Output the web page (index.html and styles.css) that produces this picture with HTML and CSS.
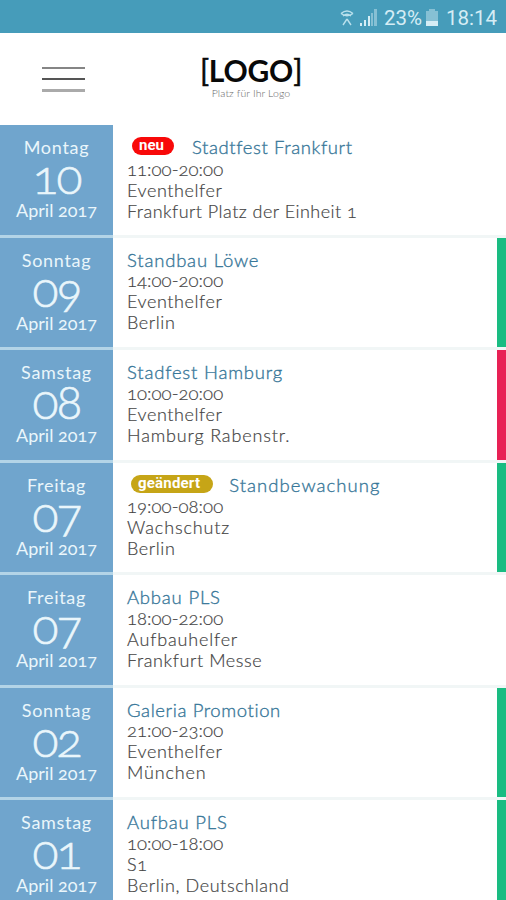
FILE: index.html
```html
<!DOCTYPE html>
<html lang="de">
<head>
<meta charset="utf-8">
<title>Termine</title>
<link rel="stylesheet" href="styles.css">
</head>
<body>
<div class="status">
  <svg class="wifi" viewBox="0 0 14 18" width="14" height="18"><path d="M1 4.5Q7-.5 13 4.5M3 7Q7 3.5 11 7M1 4.5Q7 9 13 4.5M7 10L3 16M7 10L11 16"/></svg>
  <svg class="signal" viewBox="0 0 17 17" width="17" height="17"><path d="M0 14h2v3H0zM4 11h2v6H4zM8 7h2v10H8z"/><path class="faint" d="M11 4h2v13h-2zM14 0h3v17h-3z"/></svg>
  <span class="percent">23%</span>
  <svg class="battery" viewBox="0 0 12 17" width="12" height="17"><path class="faint" d="M3 0h6v2h3v10H0V2h3z"/><path d="M0 12h12v5H0z"/></svg>
  <span class="clock">18:14</span>
</div>
<header class="header">
  <div class="menu"><i></i><i></i><i></i></div>
  <div class="logo"><b><span>[</span>LOGO<span>]</span></b><small>Platz für Ihr Logo</small></div>
</header>
<main class="list">
  <article class="row">
    <div class="date"><span>Montag</span><strong>10</strong><span class="month">April 2017</span></div>
    <div class="info tagged"><h2><em class="new">neu</em>Stadtfest Frankfurt</h2><p class="time">11:00-20:00</p><p>Eventhelfer</p><p class="long">Frankfurt Platz der Einheit 1</p></div>
  </article>
  <article class="row green">
    <div class="date"><span>Sonntag</span><strong>09</strong><span class="month">April 2017</span></div>
    <div class="info"><h2>Standbau Löwe</h2><p class="time">14:00-20:00</p><p>Eventhelfer</p><p>Berlin</p></div>
  </article>
  <article class="row red">
    <div class="date"><span>Samstag</span><strong>08</strong><span class="month">April 2017</span></div>
    <div class="info"><h2>Stadfest Hamburg</h2><p class="time">10:00-20:00</p><p>Eventhelfer</p><p class="wide">Hamburg Rabenstr.</p></div>
  </article>
  <article class="row green">
    <div class="date"><span>Freitag</span><strong>07</strong><span class="month">April 2017</span></div>
    <div class="info tagged"><h2 class="loose"><em class="changed">geändert</em>Standbewachung</h2><p class="time">19:00-08:00</p><p class="wide">Wachschutz</p><p>Berlin</p></div>
  </article>
  <article class="row">
    <div class="date"><span>Freitag</span><strong>07</strong><span class="month">April 2017</span></div>
    <div class="info"><h2>Abbau PLS</h2><p class="time">18:00-22:00</p><p class="wide">Aufbauhelfer</p><p>Frankfurt Messe</p></div>
  </article>
  <article class="row green">
    <div class="date"><span>Sonntag</span><strong>02</strong><span class="month">April 2017</span></div>
    <div class="info"><h2 class="tight">Galeria Promotion</h2><p class="time">21:00-23:00</p><p>Eventhelfer</p><p class="wide">München</p></div>
  </article>
  <article class="row green">
    <div class="date"><span>Samstag</span><strong>01</strong><span class="month">April 2017</span></div>
    <div class="info"><h2>Aufbau PLS</h2><p class="time">10:00-18:00</p><p>S1</p><p>Berlin, Deutschland</p></div>
  </article>
</main>
</body>
</html>
```
FILE: styles.css
```css
* { box-sizing: border-box; margin: 0; padding: 0; }
body { width: 506px; height: 900px; overflow: hidden; background: #fff; font-family: Lato, sans-serif; font-variant-numeric: oldstyle-nums; color: #444; }
.status { display: flex; align-items: center; justify-content: flex-end; height: 33px; padding: 2px 9px 0 0; background: #469cba; color: #d5edf5; font: 20.5px Roboto, sans-serif; }
.status svg { fill: #d5edf5; }
.wifi { margin-right: 6px; }
.status .wifi { fill: none; stroke: #b9e0ec; stroke-width: 1.4; }
.signal { margin-right: 7px; }
.battery { margin: 0 8px 0 4px; }
.faint { opacity: .45; }
.header { display: flex; height: 92px; }
.menu { width: 43px; margin: 34px 0 0 42px; }
.menu i { display: block; height: 2px; margin-bottom: 9px; background: #858585; }
.menu i:nth-child(2) { background: #555; }
.menu i:nth-child(3) { height: 3px; background: #aaa; }
.logo { width: 102px; margin: 19px 0 0 115px; text-align: center; color: #090909; }
.logo b { display: flex; justify-content: center; font-size: 30px; line-height: 36px; letter-spacing: -.2px; white-space: nowrap; }
.logo b span { font-weight: 400; -webkit-text-stroke: .5px #090909; }
.logo small { display: block; font-size: 10.5px; font-weight: 300; line-height: 10px; letter-spacing: .1px; color: #666; white-space: nowrap; }
.row { display: flex; height: 112.5px; border-bottom: 3px solid #f1f6f6; }
.date { display: flex; flex-direction: column; align-items: center; width: 113px; padding-top: 11px; background: #70a5cd; color: #eaf6fb; font-size: 18px; line-height: 22px; box-shadow: 0 3px #b3d4e7; letter-spacing: .7px; }
.date strong { font-size: 48px; font-weight: 300; line-height: 35px; margin-bottom: 6px; letter-spacing: -2px; -webkit-text-stroke: .6px #eaf6fb; }
.date .month { letter-spacing: 0; }
.info { flex: 1; padding: 10px 0 0 14px; font-size: 18px; font-weight: 300; line-height: 21px; letter-spacing: .6px; white-space: nowrap; -webkit-text-stroke: .2px; }
.tagged { padding-top: 11px; }
.info h2 { height: 22.5px; font-size: 18.5px; font-weight: 300; line-height: 24px; letter-spacing: .8px; color: #387799; -webkit-text-stroke: .35px; }
.info .time { font-size: 18.5px; letter-spacing: .05px; }
.info .long { letter-spacing: .47px; }
.info .wide { letter-spacing: .85px; }
.info em { display: inline-block; height: 18px; margin: 0 18px 0 5px; padding: 0 10px 0 7px; border-radius: 9px; background: #f80909; color: #fff; font: bold 15px/17px Roboto, sans-serif; vertical-align: 4px; letter-spacing: 0; -webkit-text-stroke: 0; }
.tagged h2 { letter-spacing: .6px; line-height: 22px; }
.info .loose { letter-spacing: 1.05px; }
.info .tight { letter-spacing: .6px; }
.info .changed { margin: 0 16px 0 4px; padding: 0 13px 0 7px; letter-spacing: .2px; background: #c6a517; }
.green { box-shadow: inset -9px 0 #1abc82; }
.red { box-shadow: inset -9px 0 #e82155; }
```
